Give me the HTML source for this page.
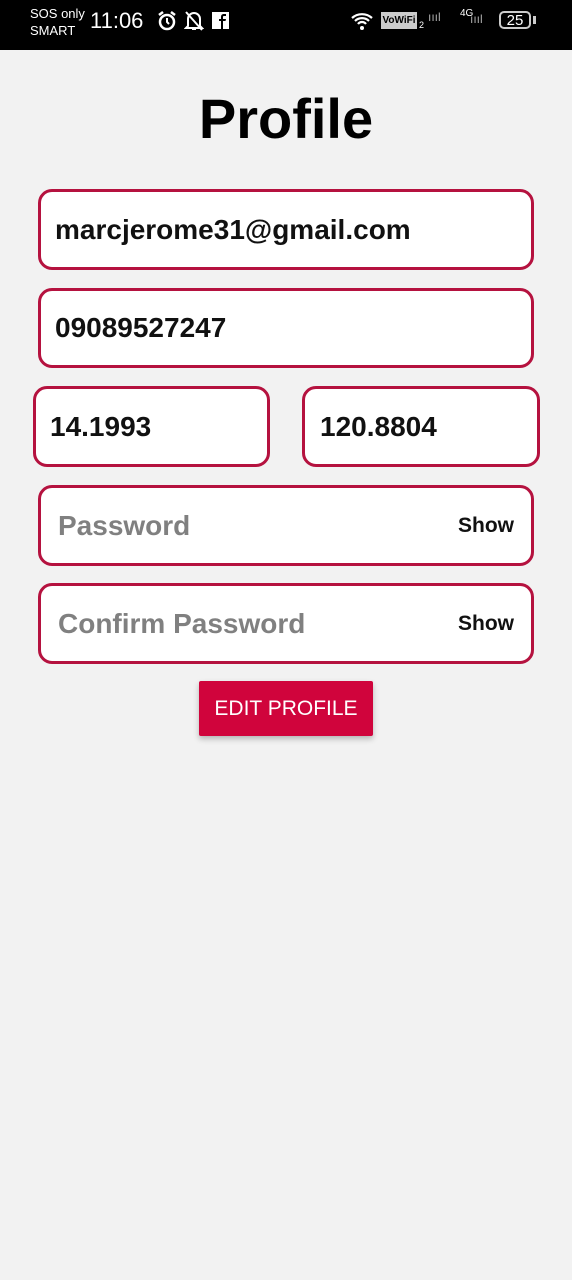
<!DOCTYPE html>
<html><head><style>
body{margin:0;width:572px;height:1280px;background:#f2f2f2;font-family:"Liberation Sans",sans-serif;position:relative;overflow:hidden}
.sb{position:absolute;left:0;top:0;width:572px;height:50px;background:#000;color:#fff}
.box{position:absolute;background:#fff;border:3px solid #b5123f;border-radius:14px;box-sizing:border-box;display:flex;align-items:center;font-size:28px;font-weight:bold;color:#111}
.ph{color:#808080;font-weight:bold;font-size:28px}
.show{position:absolute;right:17px;font-size:21px;color:#111;font-weight:bold}
.btn{position:absolute;left:199px;top:681px;width:174px;height:55px;background:#d0043c;color:#fff;font-size:21px;display:flex;align-items:center;justify-content:center;border-radius:2px;box-shadow:0 3px 6px rgba(0,0,0,.25)}
</style></head><body>
<div class="sb">
<div style="position:absolute;left:30px;top:5px;font-size:13px;line-height:17px">SOS only<br>SMART</div>
<div style="position:absolute;left:90px;top:8px;font-size:22px">11:06</div>
<svg style="position:absolute;left:156px;top:10px" width="22" height="22" viewBox="0 0 22 22"><circle cx="11" cy="12" r="7" fill="none" stroke="#fff" stroke-width="2.5"/><path d="M11 8v4l2 2" stroke="#fff" stroke-width="2" fill="none"/><path d="M3 5l4-3M19 5l-4-3" stroke="#fff" stroke-width="2.5"/></svg>
<svg style="position:absolute;left:184px;top:10px" width="20" height="22" viewBox="0 0 20 22"><path d="M4 16V9a6 6 0 0 1 12 0v7l2 2H2z M8 19h4" stroke="#fff" stroke-width="2" fill="none"/><path d="M2 2l16 18" stroke="#fff" stroke-width="2"/></svg>
<svg style="position:absolute;left:212px;top:12px" width="17" height="17" viewBox="0 0 17 17"><rect width="17" height="17" fill="#fff"/><path d="M9 17V9H7V7h2V5c0-2 1-3 3-3h2v2h-2c-1 0-1 .5-1 1v2h3l-.5 2H11v8z" fill="#000"/></svg>
<svg style="position:absolute;left:350px;top:10px" width="26" height="22" viewBox="0 0 26 22"><path d="M2 8a15 15 0 0 1 20 0M5 11a10 10 0 0 1 14 0M8 14a5 5 0 0 1 8 0" stroke="#fff" stroke-width="2.2" fill="none"/><circle cx="12" cy="18" r="2" fill="#fff"/></svg>
<div style="position:absolute;left:381px;top:12px;width:36px;height:17px;background:#ccc;color:#000;font-size:10px;line-height:17px;text-align:center;font-weight:bold">VoWiFi</div>
<div style="position:absolute;left:419px;top:20px;font-size:9px">2</div>
<div style="position:absolute;left:428px;top:10px;font-size:12px;color:#aaa">ıııl</div>
<div style="position:absolute;left:460px;top:8px;font-size:10px">4G</div>
<div style="position:absolute;left:470px;top:12px;font-size:12px;color:#aaa">ıııl</div>
<div style="position:absolute;left:499px;top:11px;width:32px;height:18px;border:2px solid #ccc;border-radius:5px;box-sizing:border-box;font-size:15px;line-height:15px;text-align:center">25</div>
<div style="position:absolute;left:533px;top:16px;width:3px;height:8px;background:#ccc"></div>
</div>
<div style="position:absolute;left:0;width:572px;top:86px;text-align:center;font-size:56px;font-weight:bold;color:#000">Profile</div>
<div class="box" style="left:38px;top:189px;width:496px;height:81px;padding-left:14px">marcjerome31@gmail.com</div>
<div class="box" style="left:38px;top:288px;width:496px;height:80px;padding-left:14px">09089527247</div>
<div class="box" style="left:33px;top:386px;width:237px;height:81px;padding-left:14px">14.1993</div>
<div class="box" style="left:302px;top:386px;width:238px;height:81px;padding-left:15px">120.8804</div>
<div class="box" style="left:38px;top:485px;width:496px;height:81px;padding-left:17px"><span class="ph">Password</span><span class="show">Show</span></div>
<div class="box" style="left:38px;top:583px;width:496px;height:81px;padding-left:17px"><span class="ph">Confirm Password</span><span class="show">Show</span></div>
<div class="btn">EDIT PROFILE</div>
</body></html>
